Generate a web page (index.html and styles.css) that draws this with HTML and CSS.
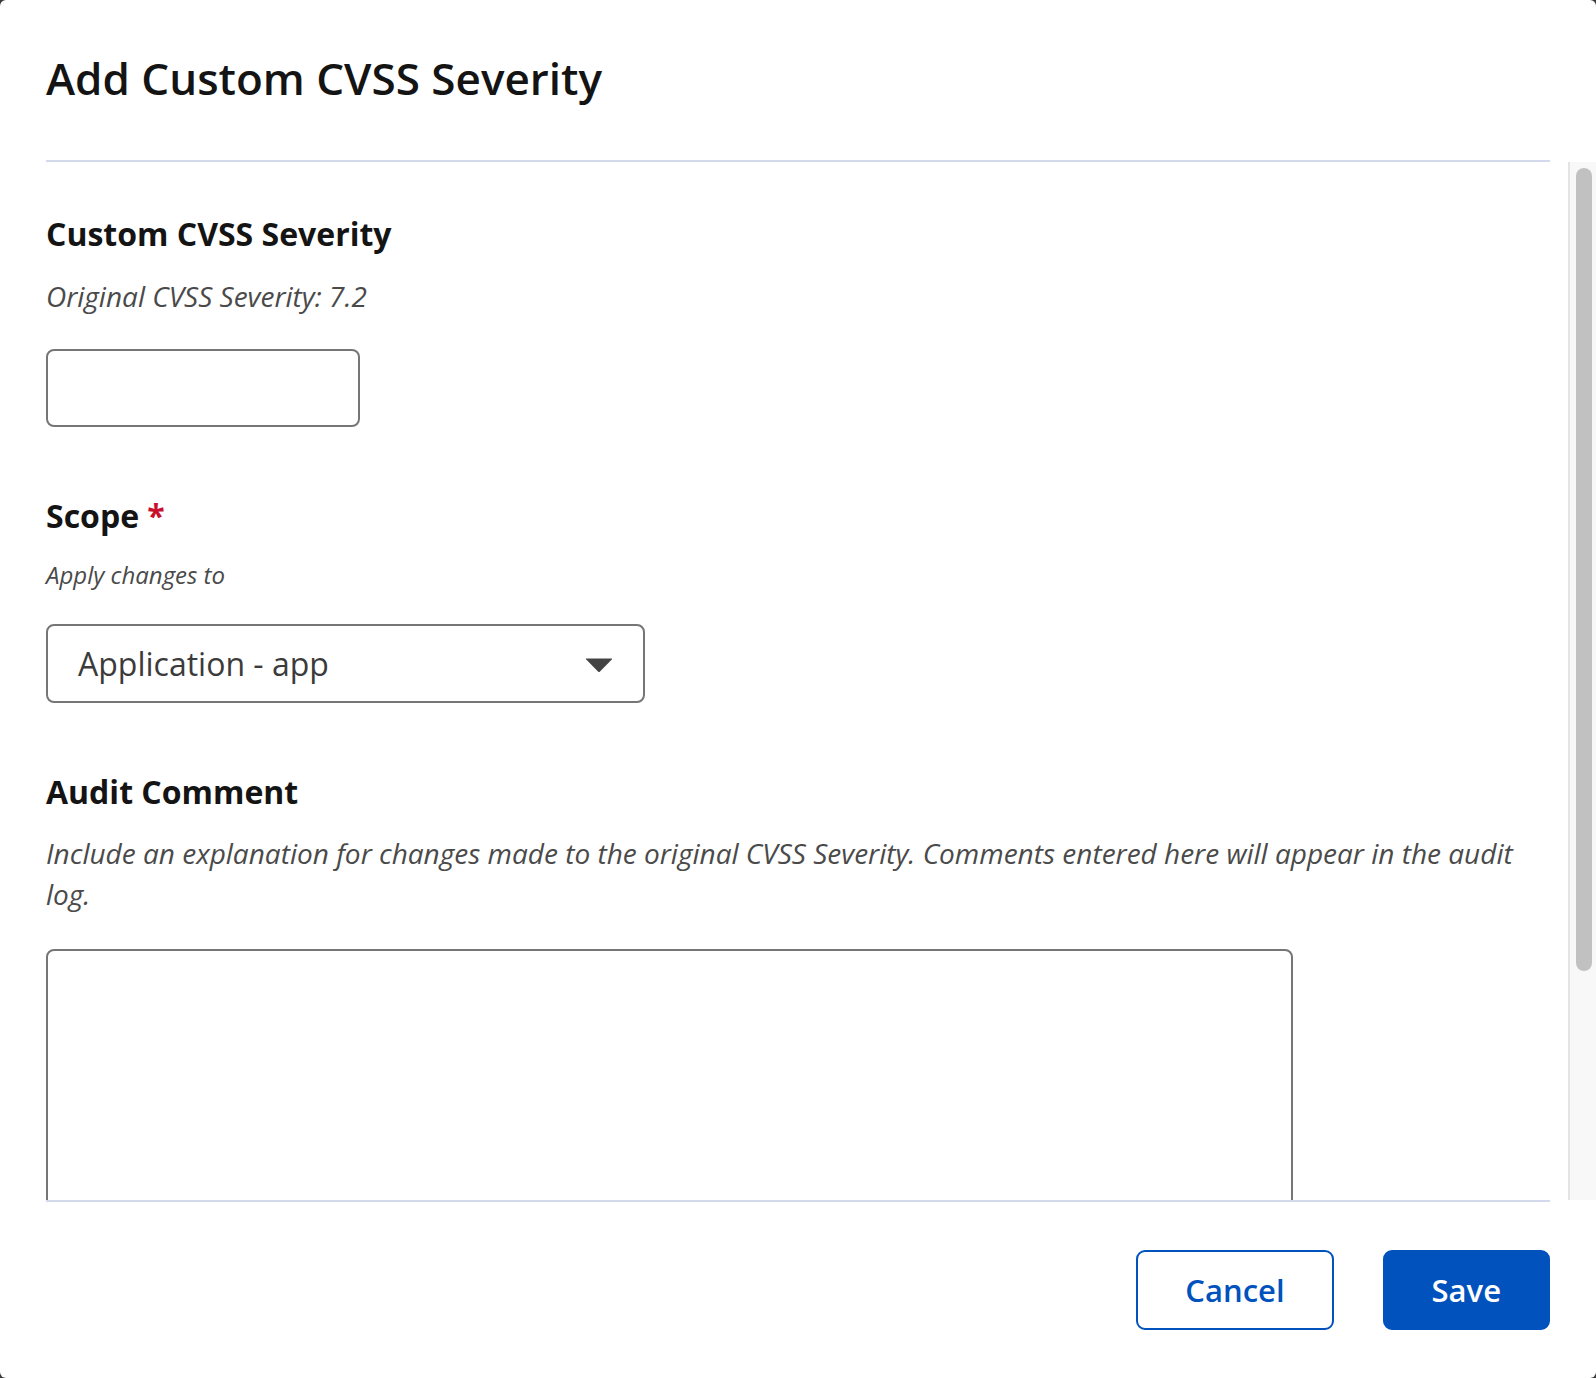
FILE: index.html
```html
<!DOCTYPE html>
<html lang="en">
<head>
<meta charset="utf-8">
<title>Add Custom CVSS Severity</title>
<link rel="stylesheet" href="styles.css">
</head>
<body>
<div class="modal">
  <header class="modal-header">
    <h1 class="modal-title">Add Custom CVSS Severity</h1>
  </header>
  <div class="modal-main">
    <main class="modal-body">
      <section class="field">
        <h2 class="field-label">Custom CVSS Severity</h2>
        <p class="field-hint">Original CVSS Severity: 7.2</p>
        <input class="text-input" type="text" aria-label="Custom CVSS Severity">
      </section>
      <section class="field field-gap">
        <h2 class="field-label">Scope <span class="required">*</span></h2>
        <p class="field-hint field-hint-small">Apply changes to</p>
        <div class="select">
          <span class="select-value">Application - app</span>
          <svg class="select-caret" width="28" height="16" viewBox="0 0 28 16" aria-hidden="true">
            <path d="M1.5 1.5 H26.5 Q27.6 1.5 26.8 2.4 L15 14.6 Q14 15.6 13 14.6 L1.2 2.4 Q0.4 1.5 1.5 1.5 Z" fill="#444444"/>
          </svg>
        </div>
      </section>
      <section class="field field-gap">
        <h2 class="field-label">Audit Comment</h2>
        <p class="field-hint field-hint-wrap">Include an explanation for changes made to the original CVSS Severity. Comments entered here will appear in the audit log.</p>
        <textarea class="text-area" aria-label="Audit Comment"></textarea>
      </section>
    </main>
    <div class="scrollbar" aria-hidden="true">
      <div class="scrollbar-thumb"></div>
    </div>
  </div>
  <footer class="modal-footer">
    <button class="btn btn-secondary" type="button">Cancel</button>
    <button class="btn btn-primary" type="button">Save</button>
  </footer>
</div>
</body>
</html>
```
FILE: styles.css
```css
* {
  box-sizing: border-box;
}

html,
body {
  margin: 0;
  padding: 0;
  height: 100%;
  background: #3a3a3a;
}

body {
  font-family: "Open Sans", "Noto Sans", "Liberation Sans", sans-serif;
  color: #151515;
}

.modal {
  width: 1596px;
  height: 1378px;
  background: #ffffff;
  border-radius: 6px;
  display: flex;
  flex-direction: column;
  overflow: hidden;
}

.modal-header {
  margin: 0 46px;
  padding: 48px 0 51px;
  border-bottom: 2px solid #d5d9ec;
  flex: none;
}

.modal-title {
  margin: 0;
  font-size: 44px;
  line-height: 61px;
  font-weight: 600;
  color: #141414;
}

.modal-main {
  flex: 1;
  min-height: 0;
  display: flex;
}

.modal-body {
  flex: 1;
  min-width: 0;
  overflow: hidden;
  padding: 51px 47px 66px 46px;
}

.scrollbar {
  flex: none;
  width: 28px;
  background: #f8f8f8;
  border-left: 2px solid #e4e4e4;
  padding: 6px 4px 0 6px;
}

.scrollbar-thumb {
  height: 803px;
  background: #c1c1c1;
  border-radius: 8px;
}

.field {
  display: flex;
  flex-direction: column;
  align-items: flex-start;
}

.field-gap {
  margin-top: 68px;
}

.field-label {
  margin: 0;
  font-size: 32px;
  line-height: 42px;
  font-weight: 700;
  color: #141414;
}

.required {
  color: #c8102e;
}

.field-hint {
  margin: 21px 0 0;
  font-size: 28px;
  line-height: 40px;
  font-style: italic;
  color: #4a4a4a;
}

.field-hint-small {
  margin-top: 21px;
  font-size: 24px;
  line-height: 34px;
}

.field-hint-wrap {
  margin-top: 20px;
  line-height: 41px;
}

.text-input {
  margin-top: 33px;
  width: 314px;
  height: 78px;
  border: 2px solid #767676;
  border-radius: 8px;
  background: #fff;
  font: inherit;
  font-size: 31px;
  padding: 0 28px;
  outline: none;
}

.select {
  margin-top: 32px;
  width: 599px;
  height: 79px;
  border: 2px solid #767676;
  border-radius: 8px;
  display: flex;
  align-items: center;
  justify-content: space-between;
  padding: 0 30px 0 30px;
}

.select-value {
  font-size: 32px;
  line-height: 42px;
  color: #3b3b3b;
}

.select-caret {
  display: block;
  margin-top: 2px;
}

.text-area {
  margin-top: 34px;
  width: 1247px;
  height: 480px;
  border: 2px solid #767676;
  border-radius: 8px;
  resize: none;
  font: inherit;
  outline: none;
  background: #fff;
}

.modal-footer {
  flex: none;
  margin: 0 46px;
  padding: 48px 0;
  border-top: 2px solid #d5d9ec;
  display: flex;
  justify-content: flex-end;
  gap: 49px;
}

.btn {
  height: 80px;
  padding: 0 47px;
  border-radius: 9px;
  border: 2px solid #0152bd;
  font-family: "Open Sans", "Noto Sans", sans-serif;
  font-size: 31px;
  font-weight: 600;
  line-height: 42px;
  cursor: pointer;
}

.btn-secondary {
  background: #ffffff;
  color: #0152bd;
}

.btn-primary {
  background: #0152bd;
  color: #ffffff;
}
```
